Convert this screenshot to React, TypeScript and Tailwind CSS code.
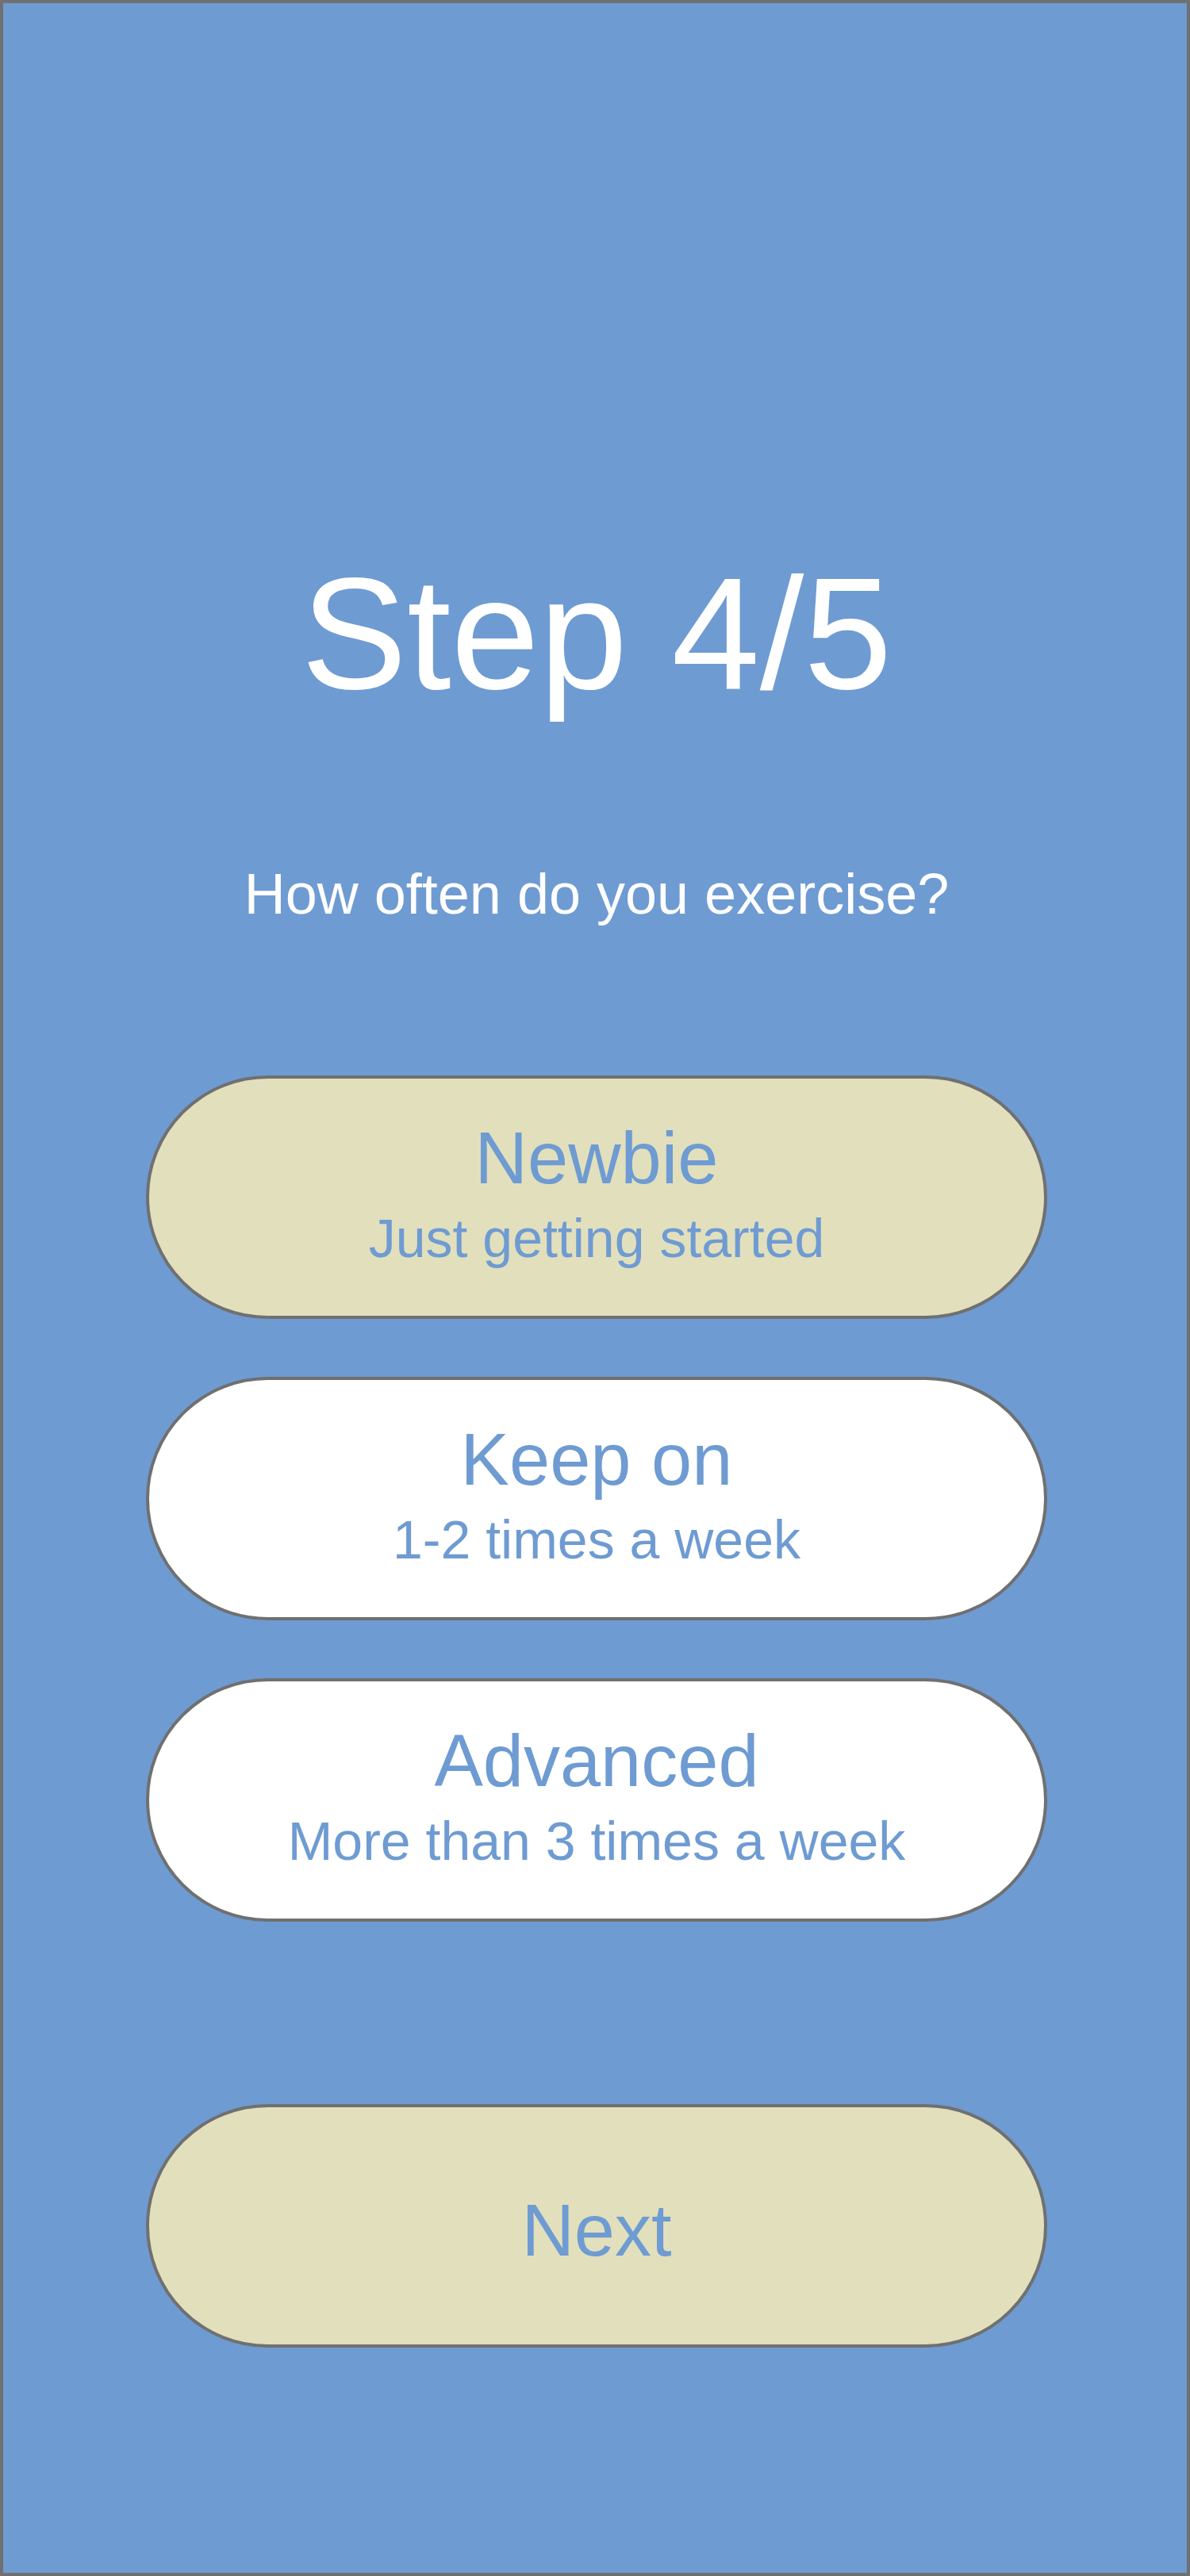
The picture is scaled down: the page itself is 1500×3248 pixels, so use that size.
import React from 'react';

const options = [
  { title: 'Newbie', sub: 'Just getting started', selected: true },
  { title: 'Keep on', sub: '1-2 times a week', selected: false },
  { title: 'Advanced', sub: 'More than 3 times a week', selected: false },
];

function OptionButton({ title, sub, selected }: { title: string; sub: string; selected: boolean }) {
  return (
    <button
      className={`flex h-[307px] w-[1136px] flex-col items-center rounded-full border-4 border-[#707070] pt-[40px] text-[#6e9bd2] ${
        selected ? 'bg-[#e2dfbd]' : 'bg-white'
      }`}
    >
      <span className="text-[92px] leading-[120px]">{title}</span>
      <span className="text-[68px] leading-[82px]">{sub}</span>
    </button>
  );
}

export default function App() {
  return (
    <div
      className="flex h-[3248px] w-[1500px] flex-col items-center border-4 border-[#707070] bg-[#6e9bd2] pt-[695px]"
      style={{ fontFamily: '"Liberation Sans", Arial, sans-serif' }}
    >
      <h1 className="ml-[4px] text-[200px] leading-[200px] text-white">Step 4/5</h1>
      <p className="ml-[4px] mt-[192px] text-[72px] leading-[72px] text-white">How often do you exercise?</p>

      <div className="ml-[4px] mt-[193px] flex flex-col gap-[73px]">
        {options.map((o) => (
          <OptionButton key={o.title} {...o} />
        ))}
      </div>

      <button className="ml-[4px] mt-[230px] flex h-[307px] w-[1136px] items-center justify-center rounded-full border-4 border-[#707070] bg-[#e2dfbd] pt-[10px] text-[92px] leading-[110px] text-[#6e9bd2]">
        Next
      </button>
    </div>
  );
}
